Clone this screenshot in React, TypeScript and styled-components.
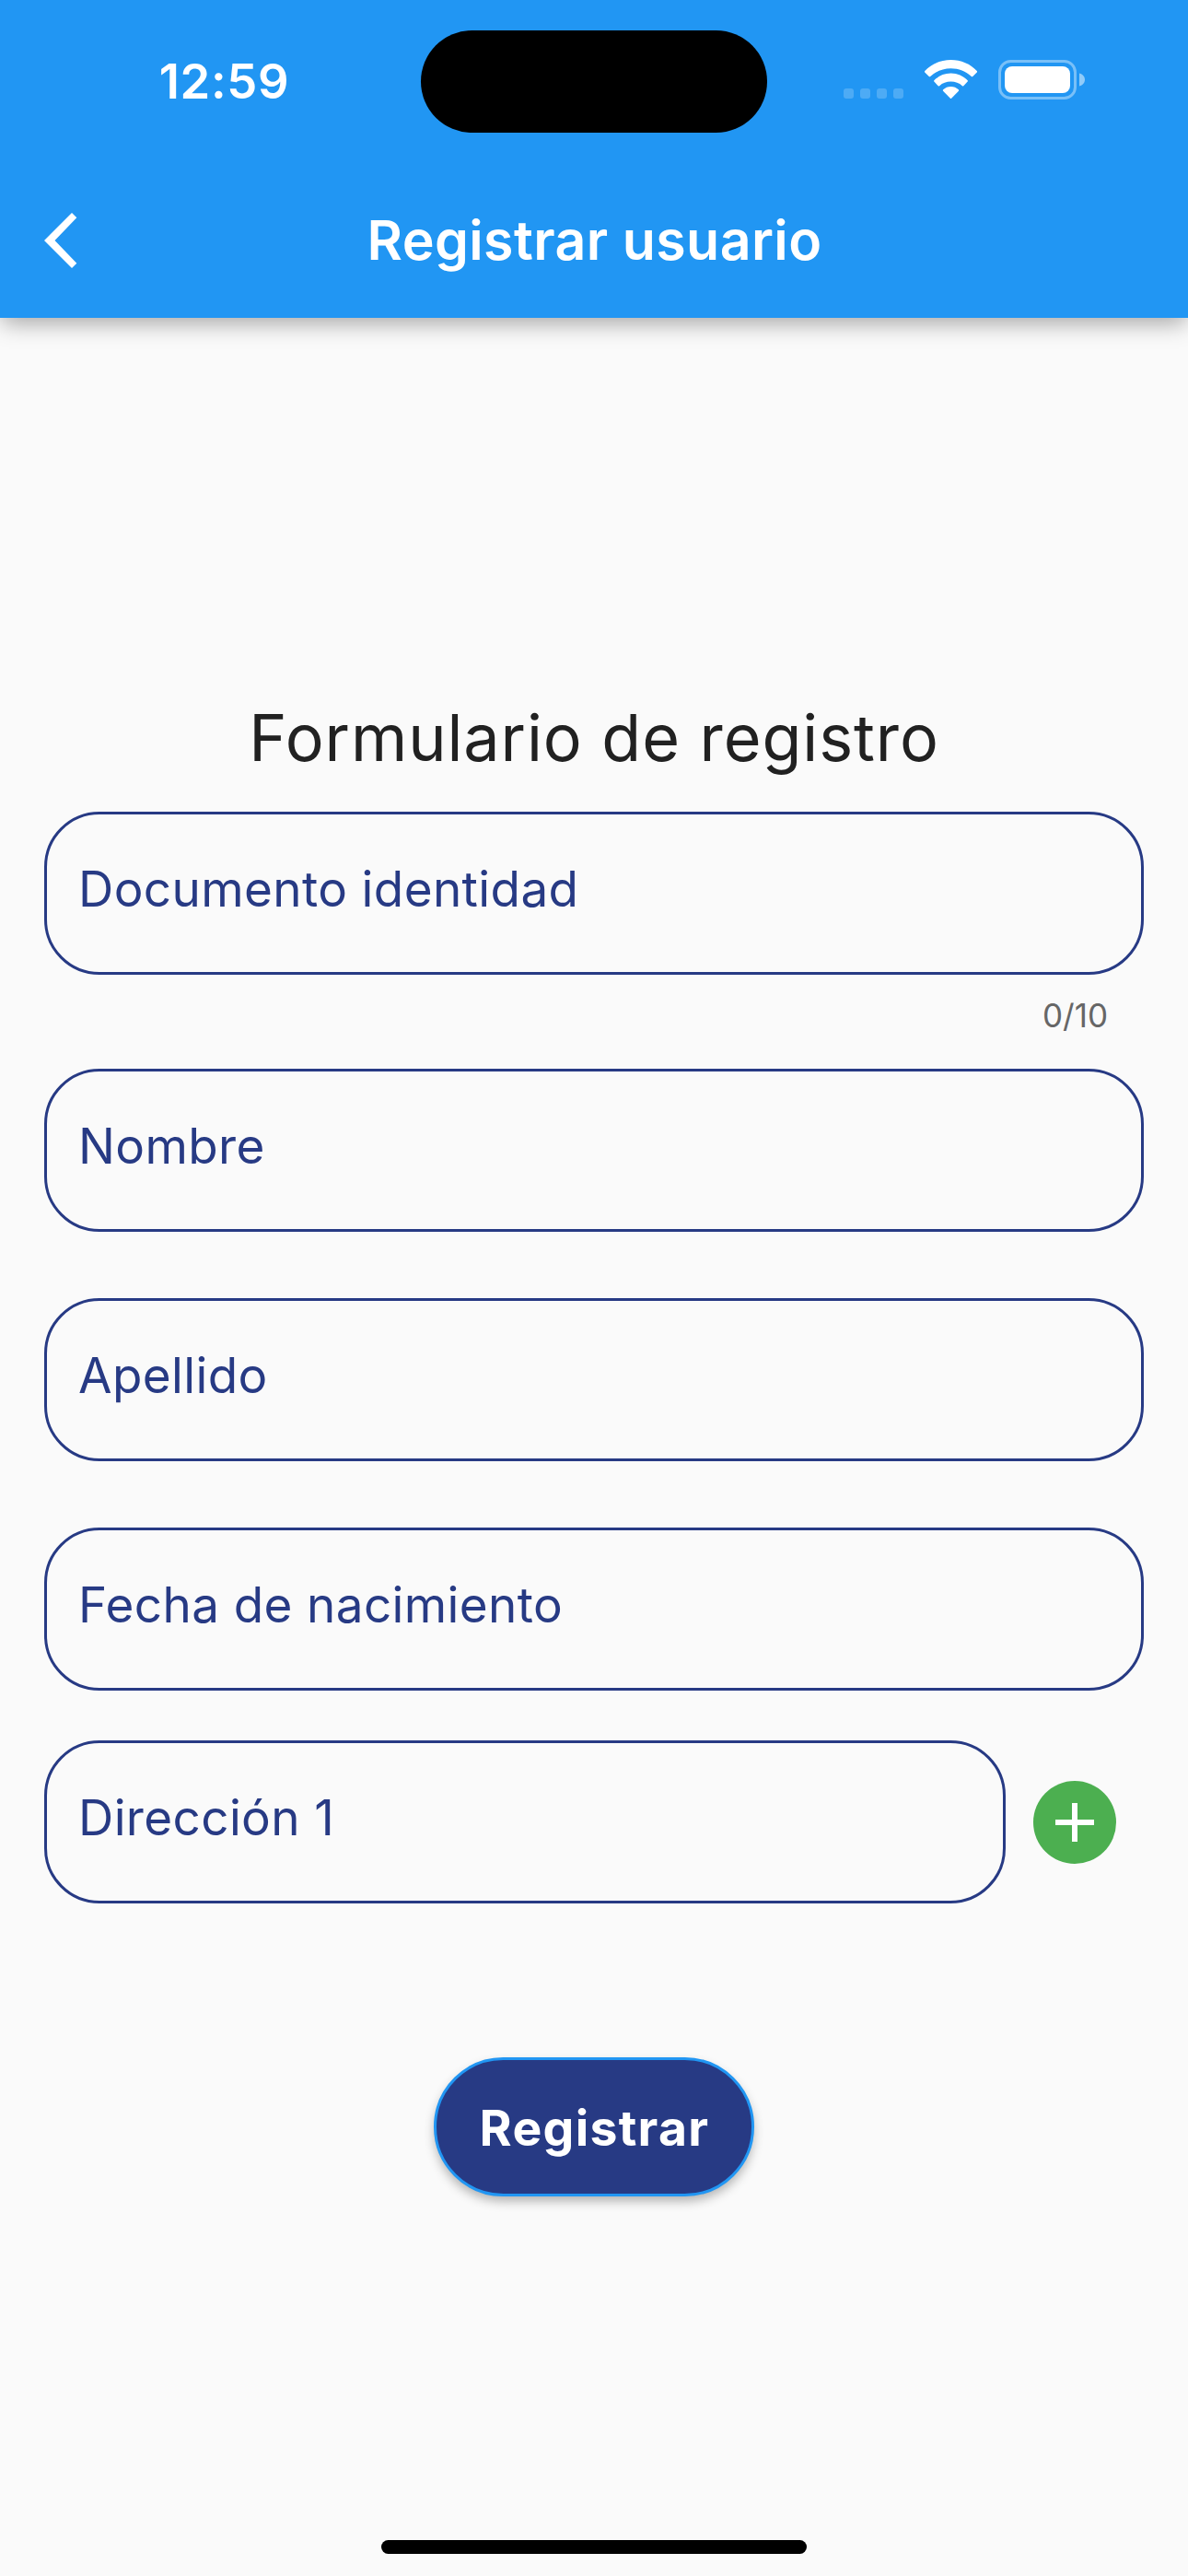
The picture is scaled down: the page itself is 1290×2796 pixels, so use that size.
import React from "react";
import styled, { createGlobalStyle } from "styled-components";

const BLUE = "#2196f3";
const NAVY = "#273a84";
const PAPER = "#fafafa";

const GlobalStyle = createGlobalStyle`
  *, *::before, *::after { box-sizing: border-box; }
  body {
    margin: 0;
    background: ${PAPER};
    font-family: Inter, "Liberation Sans", sans-serif;
  }
`;

const Screen = styled.div`
  display: flex;
  flex-direction: column;
  width: 1290px;
  height: 2796px;
  overflow: hidden;
  background: ${PAPER};
`;

const Header = styled.header`
  flex: none;
  height: 345px;
  background: ${BLUE};
  color: #fff;
  box-shadow: 0 7px 24px -2px rgba(0, 0, 0, 0.36);
`;

const StatusBar = styled.div`
  display: grid;
  grid-template-columns: 457px 376px 457px;
  height: 177px;
`;

const Clock = styled.time`
  padding-left: 30px;
  text-align: center;
  font-size: 52.5px;
  font-weight: 600;
  line-height: 176px;
  letter-spacing: 0.7px;
`;

const Island = styled.div`
  height: 111px;
  margin-top: 33px;
  border-radius: 56px;
  background: #000;
`;

const Indicators = styled.div`
  display: flex;
  align-items: flex-start;
  padding: 65px 0 0 83px;
`;

const SignalDots = styled.div`
  display: flex;
  gap: 7px;
  margin-top: 31px;
`;

const SignalDot = styled.i`
  width: 11px;
  height: 11px;
  border-radius: 3px;
  background: rgba(255, 255, 255, 0.2);
`;

const WifiIcon = styled.svg`
  width: 57px;
  height: 43px;
  margin-left: 23px;
`;

const BatteryIcon = styled.svg`
  width: 95px;
  height: 43px;
  margin-left: 23px;
`;

const AppBar = styled.div`
  display: grid;
  grid-template-columns: 168px 1fr 168px;
  align-items: center;
  height: 168px;
`;

const BackButton = styled.button`
  display: flex;
  padding: 0 0 0 48px;
  border: 0;
  background: none;
`;

const AppTitle = styled.h1`
  margin: 0;
  padding-left: 1px;
  text-align: center;
  font-size: 59px;
  font-weight: 600;
  line-height: 72px;
  letter-spacing: 0.4px;
`;

const Form = styled.main`
  display: flex;
  flex-direction: column;
  flex: 1;
  padding: 414px 48px 0;
`;

const FormTitle = styled.h2`
  margin: 0 0 38px;
  text-align: center;
  color: #212121;
  font-size: 70px;
  font-weight: 400;
  line-height: 84px;
  letter-spacing: 0.93px;
`;

const Field = styled.label<{ $gap?: number }>`
  display: flex;
  flex: none;
  align-items: center;
  height: 177px;
  margin-bottom: ${(p) => p.$gap ?? 0}px;
  padding: 0 34px 9px;
  border: 3px solid ${NAVY};
  border-radius: 60px;
  color: ${NAVY};
  font-size: 53px;
  line-height: 64px;
  letter-spacing: 0.38px;
`;

const Counter = styled.div`
  height: 102px;
  padding: 22px 39px 0;
  text-align: right;
  color: #666;
  font-size: 35px;
  line-height: 44px;
`;

const AddressRow = styled.div`
  display: grid;
  grid-template-columns: 1044px 90px;
  column-gap: 30px;
  align-items: center;
`;

const AddButton = styled.button`
  display: grid;
  place-items: center;
  width: 90px;
  height: 90px;
  padding: 0;
  border: 0;
  border-radius: 50%;
  background: #4caf50;
`;

const SubmitButton = styled.button`
  align-self: center;
  width: 348px;
  height: 151px;
  margin-top: 167px;
  padding: 2px 0 0 1px;
  border: 3px solid ${BLUE};
  border-radius: 76px;
  background: ${NAVY};
  color: #fff;
  box-shadow: 0 6px 12px -1px rgba(0, 0, 0, 0.3);
  font-family: inherit;
  font-size: 53.5px;
  font-weight: 700;
  line-height: 64px;
  letter-spacing: 1.3px;
`;

const HomeBar = styled.div`
  flex: none;
  align-self: center;
  width: 462px;
  height: 15px;
  margin-bottom: 24px;
  border-radius: 8px;
  background: #000;
`;

export default function App() {
  return (
    <Screen>
      <GlobalStyle />
      <Header>
        <StatusBar>
          <Clock>12:59</Clock>
          <Island />
          <Indicators>
            <SignalDots>
              <SignalDot />
              <SignalDot />
              <SignalDot />
              <SignalDot />
            </SignalDots>
            <WifiIcon viewBox="0 0 58 43" fill="#fff" preserveAspectRatio="none">
              <path d="M29 0C40.300 0 50.500 4.300 58 12.200Q58.300 13 57.800 13.600L52.900 18.200Q52.300 18.500 51.700 18C45.500 12.300 37.700 9.200 29 9.200S12.500 12.300 6.300 18Q5.700 18.500 5.100 18.200L.2 13.600Q-.3 13 0 12.200C7.500 4.300 17.700 0 29 0Z" />
              <path d="M29 14.500C36.200 14.500 42.600 17.300 47.500 22.300Q48 23 47.500 23.600L43 28.300Q42.300 28.700 41.600 28.200C38.200 25 33.900 23.500 29 23.500S19.800 25 16.400 28.200Q15.700 28.700 15 28.300L10.500 23.600Q10 23 10.500 22.300C15.400 17.300 21.800 14.500 29 14.500Z" />
              <path d="M29 29C32.300 29 35.200 30.200 37.500 32.300Q38.200 33 37.600 33.700L29.600 41.800Q29 42.300 28.400 41.800L20.400 33.700Q19.800 33 20.500 32.300C22.800 30.200 25.700 29 29 29Z" />
            </WifiIcon>
            <BatteryIcon viewBox="0 0 95 43">
              <rect x="1.500" y="1.500" width="82" height="40" rx="12" fill="none" stroke="#fff" strokeOpacity=".4" strokeWidth="3" />
              <rect x="7" y="7" width="71" height="29" rx="8" fill="#fff" />
              <path d="M88 14.500C91.700 15.500 94 18.200 94 21.500S91.700 27.500 88 28.500Z" fill="#fff" fillOpacity=".5" />
            </BatteryIcon>
          </Indicators>
        </StatusBar>
        <AppBar>
          <BackButton aria-label="Volver">
            <svg width="36" height="60" viewBox="0 0 36 60" fill="#fff">
              <path d="M30 0L35.300 5.300L11.500 30L35.300 54.700L30 60L0 30Z" />
            </svg>
          </BackButton>
          <AppTitle>Registrar usuario</AppTitle>
        </AppBar>
      </Header>
      <Form>
        <FormTitle>Formulario de registro</FormTitle>
        <Field>Documento identidad</Field>
        <Counter>0/10</Counter>
        <Field $gap={72}>Nombre</Field>
        <Field $gap={72}>Apellido</Field>
        <Field $gap={54}>Fecha de nacimiento</Field>
        <AddressRow>
          <Field>Dirección 1</Field>
          <AddButton aria-label="Agregar dirección">
            <svg width="42" height="42" viewBox="0 0 42 42" fill="#fff">
              <path d="M18 0H24V18H42V24H24V42H18V24H0V18H18Z" />
            </svg>
          </AddButton>
        </AddressRow>
        <SubmitButton>Registrar</SubmitButton>
      </Form>
      <HomeBar />
    </Screen>
  );
}
